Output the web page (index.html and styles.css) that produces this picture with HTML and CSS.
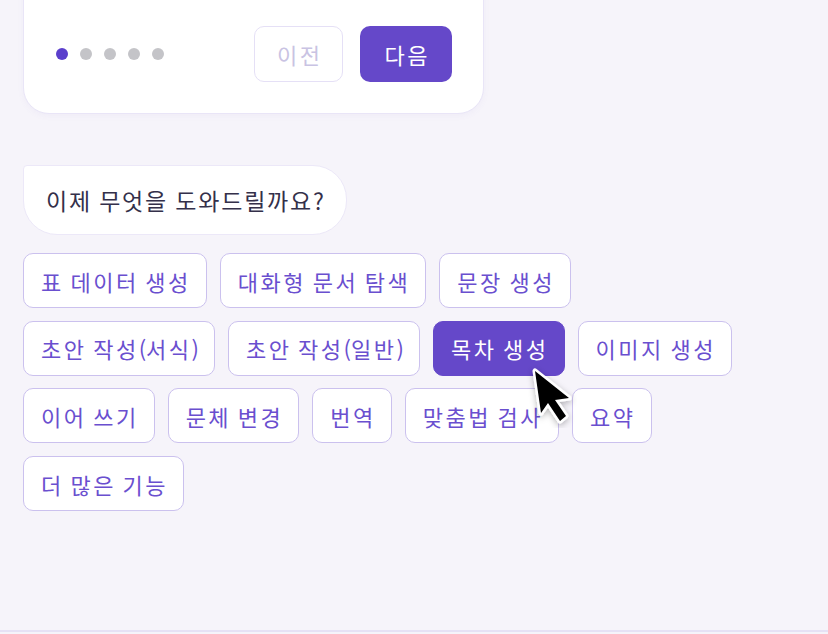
FILE: index.html
```html
<!DOCTYPE html>
<html lang="ko">
<head>
<meta charset="utf-8">
<link rel="stylesheet" href="styles.css">
</head>
<body>
<div class="page">
  <main class="chat">
    <section class="card">
      <div class="card-foot">
        <div class="dots">
          <span class="dot active"></span>
          <span class="dot"></span>
          <span class="dot"></span>
          <span class="dot"></span>
          <span class="dot"></span>
        </div>
        <div class="nav">
          <button class="btn btn-prev">이전</button>
          <button class="btn btn-next">다음</button>
        </div>
      </div>
    </section>

    <div class="bubble">이제 무엇을 도와드릴까요?</div>

    <div class="chips">
      <div class="chip-row">
        <button class="chip">표 데이터 생성</button>
        <button class="chip">대화형 문서 탐색</button>
        <button class="chip">문장 생성</button>
      </div>
      <div class="chip-row">
        <button class="chip">초안 작성<span class="p">(</span>서식<span class="p">)</span></button>
        <button class="chip">초안 작성<span class="p">(</span>일반<span class="p">)</span></button>
        <button class="chip chip-active">목차 생성</button>
        <button class="chip">이미지 생성</button>
      </div>
      <div class="chip-row">
        <button class="chip">이어 쓰기</button>
        <button class="chip">문체 변경</button>
        <button class="chip">번역</button>
        <button class="chip">맞춤법 검사</button>
        <button class="chip">요약</button>
      </div>
      <div class="chip-row">
        <button class="chip">더 많은 기능</button>
      </div>
    </div>
  </main>
  <footer class="bottom-bar"></footer>

  <svg class="cursor" width="52" height="66" viewBox="0 0 52 66" aria-hidden="true">
    <defs>
      <filter id="sh" x="-40%" y="-40%" width="180%" height="180%">
        <feDropShadow dx="0" dy="2" stdDeviation="3" flood-color="#000" flood-opacity="0.28"/>
      </filter>
    </defs>
    <path d="M10 9 L16 51 L23 41 L35 59 L41 54 L30 38 L44 36 Z" fill="#000" stroke="#fff" stroke-width="5" stroke-linejoin="round" paint-order="stroke" filter="url(#sh)"/>
  </svg>
</div>
</body>
</html>
```

FILE: styles.css
```css
* { box-sizing: border-box; }

html, body {
  margin: 0;
  padding: 0;
  height: 100%;
}

body {
  background: #f6f4fa;
  font-family: "Noto Sans CJK KR", "Noto Sans", sans-serif;
  overflow: hidden;
}

.page {
  position: relative;
  height: 634px;
  display: flex;
  flex-direction: column;
}

.chat {
  flex: 1;
  padding: 0 23px;
  display: flex;
  flex-direction: column;
  align-items: flex-start;
}

.card {
  width: 461px;
  margin-top: -40px;
  padding: 65px 31px 31px 32px;
  background: #fff;
  border: 1px solid #e9e5f7;
  border-radius: 26px;
  box-shadow: 0 2px 6px rgba(120, 100, 200, 0.05);
}

.card-foot {
  display: flex;
  align-items: center;
  justify-content: space-between;
}

.dots {
  display: flex;
  gap: 12px;
}

.dot {
  width: 12px;
  height: 12px;
  border-radius: 50%;
  background: #c4c4c8;
}

.dot.active { background: #5b3fcc; }

.nav {
  display: flex;
  gap: 17px;
}

.btn {
  height: 56px;
  border-radius: 10px;
  font-family: inherit;
  font-size: 22px;
  letter-spacing: 2.5px;
  padding: 0 0 0 2.5px;
  cursor: pointer;
}

.btn-prev {
  width: 89px;
  background: #fff;
  border: 1.5px solid #e5e0f6;
  color: #c9c3e3;
}

.btn-next {
  width: 92px;
  background: #6548c9;
  border: none;
  color: #fff;
}

.bubble {
  margin-top: 51px;
  height: 70px;
  display: flex;
  align-items: center;
  padding: 0 20px 0 22px;
  background: #fff;
  border: 1px solid #ece8f8;
  border-radius: 4px 34px 34px 34px;
  font-size: 23px;
  letter-spacing: 1.8px;
  word-spacing: -1px;
  color: #34304a;
}

.chips {
  margin-top: 18px;
  display: flex;
  flex-direction: column;
  gap: 12.7px;
}

.chip-row {
  display: flex;
  gap: 13px;
}

.chip {
  height: 55px;
  padding: 0 15px 0 17px;
  background: #fff;
  border: 1.5px solid #cbc1ee;
  border-radius: 10px;
  color: #6a4fcf;
  font-family: inherit;
  font-size: 22px;
  letter-spacing: 2.5px;
  word-spacing: -2px;
  cursor: pointer;
  white-space: nowrap;
}

.chip .p { letter-spacing: 0; }

.chip-active {
  background: #6548c9;
  border-color: #6548c9;
  color: #fff;
}

.bottom-bar {
  height: 4px;
  border-top: 2px solid #e6e1f5;
  background: #f5f3fa;
}

.cursor {
  position: absolute;
  left: 525px;
  top: 362px;
  pointer-events: none;
}
```
